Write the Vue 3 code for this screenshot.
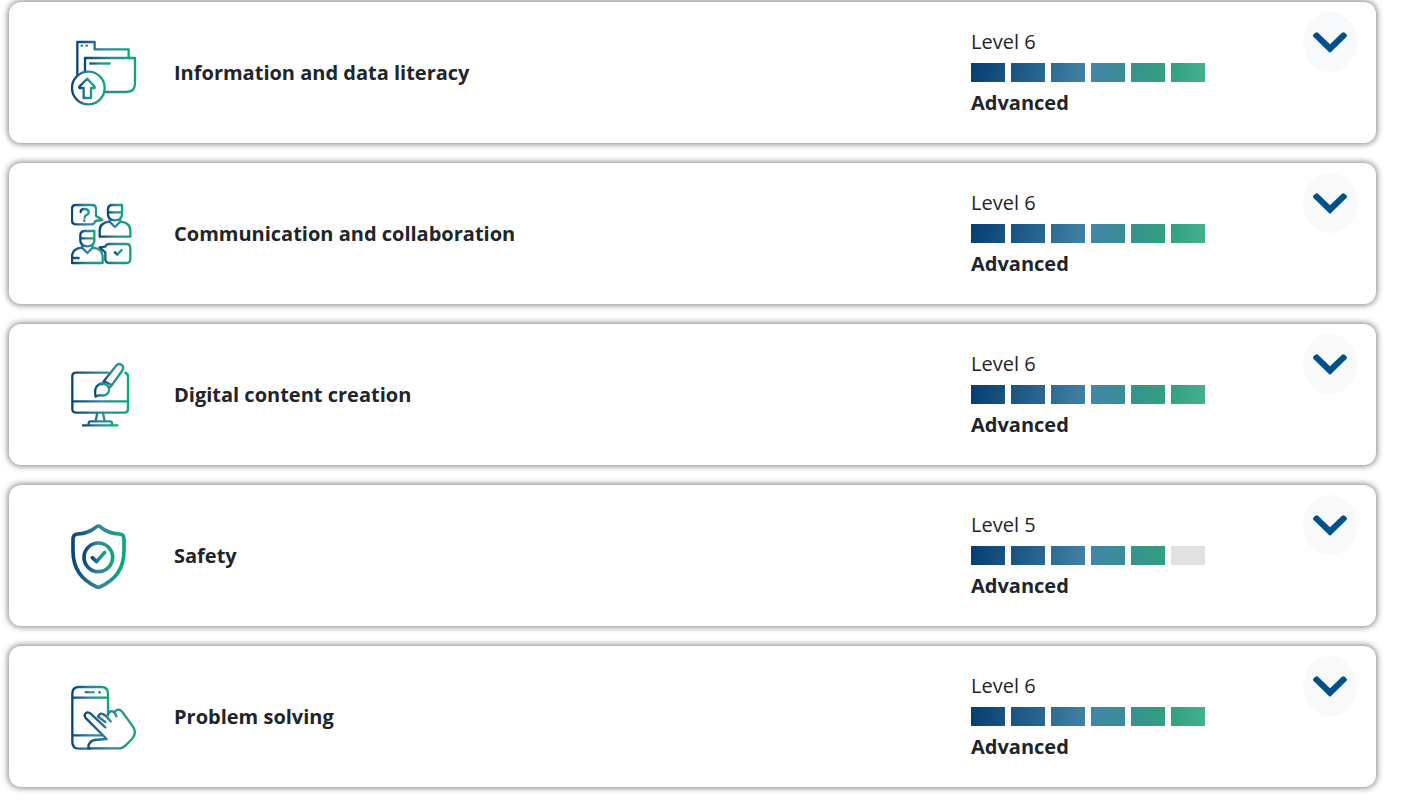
<template>
  <main class="competences">
    <section v-for="(area, index) in areas" :key="area.title" class="card">
      <svg class="card-icon" :viewBox="area.icon.viewBox" aria-hidden="true">
        <defs>
          <linearGradient :id="`icon-gradient-${index}`">
            <stop offset="0" stop-color="#0a4679" />
            <stop offset="0.5" stop-color="#3583a0" />
            <stop offset="1" stop-color="#0aa978" />
          </linearGradient>
        </defs>
        <path
          v-for="d in area.icon.strokes"
          :key="d"
          :d="d"
          fill="none"
          :stroke="`url(#icon-gradient-${index})`"
          :stroke-width="area.icon.weight"
          stroke-linecap="round"
          stroke-linejoin="round"
        />
        <path
          v-for="d in area.icon.fills"
          :key="d"
          :d="d"
          :fill="`url(#icon-gradient-${index})`"
        />
      </svg>
      <h2 class="card-title">{{ area.title }}</h2>
      <div class="level">
        <span class="level-number">Level {{ area.level }}</span>
        <div class="level-bar">
          <span
            v-for="step in 6"
            :key="step"
            class="segment"
            :class="step <= area.level ? `segment-${step}` : ''"
          ></span>
        </div>
        <strong class="level-name">Advanced</strong>
      </div>
      <button
        type="button"
        class="toggle"
        :aria-label="`Show ${area.title}`"
        :aria-expanded="opened === index"
        @click="toggle(index)"
      >
        <svg class="chevron" viewBox="69 95 102 63" aria-hidden="true">
          <path
            d="M71 102L76 97Q80 94 84 97L120 132L156 97Q160 94 164 97L169 102Q173 106 169 110L123 155Q120 158 117 155L71 110Q67 106 71 102Z"
          />
        </svg>
      </button>
    </section>
  </main>
</template>

<script setup>
import { ref } from "vue"

const folderIcon = {
  viewBox: "33 27 201 201",
  weight: 7,
  strokes: [
    "M52 137V36H104V58H206V82",
    "M75 124V84H225V160Q225 186 199 186H137",
    "M134 174A49 49 0 1 1 36 174A49 49 0 1 1 134 174Z",
    "M82 146L104 170V174H93V204H71V174H58V170Z",
  ],
  fills: ["M88 97H152V104H88Z", "M62 44H69V50H62Z", "M77 44H84V50H77Z"],
}

const peopleIcon = {
  viewBox: "33 21 201 201",
  weight: 7,
  strokes: [
    "M48 36H96Q108 36 108 48V68L127 81L106 84Q103 94 94 94H48Q36 94 36 82V48Q36 36 48 36Z",
    "M62 57Q62 48 73 48Q86 48 86 58Q86 64 79 66Q74 68 74 74M73 82V84",
    "M144 58V49Q144 36 158 36H186V64Q186 82 165 82Q144 82 144 64V58H186",
    "M149 81V86Q119 89 119 113V131H211V113Q211 89 181 86V81M149 86L165 102L181 86",
    "M61 136V127Q61 114 75 114H103V142Q103 160 82 160Q61 160 61 142V136H103",
    "M66 159V164Q36 167 36 191V210H128V191Q128 167 98 164V159M66 164L82 180L98 164M36 195H56V196",
    "M148 153H199Q211 153 211 165V198Q211 210 199 210H148Q136 210 136 198V178L119 163L136 161Q138 153 148 153Z",
    "M165 178L172 185L185 171",
  ],
  fills: [],
}

const monitorIcon = {
  viewBox: "33 24 201 201",
  weight: 7,
  strokes: [
    "M144 59H48Q37 59 37 70V168Q37 179 48 179H193Q204 179 204 168V70Q204 63 196 59M37 145H204",
    "M112 180L107 204M129 180L134 204M86 217V211Q86 205 92 205H150Q156 205 156 211V217M69 217H172",
    "M132 84L166 41Q174 29 184 35Q194 42 186 54L155 97L132 84M132 84L126 94M155 97L147 105",
    "M107 131Q103 112 109 102Q121 86 137 94Q151 103 146 116Q139 130 122 127Q114 126 107 131Z",
  ],
  fills: [],
}

const shieldIcon = {
  viewBox: "33 24 201 201",
  weight: 11,
  strokes: [
    "M115 36Q119 36 123 40Q144 58 178 60Q192 61 192 75V111Q192 187 119 219Q115 221 111 219Q39 187 39 111V75Q39 61 53 60Q86 58 107 40Q111 36 115 36Z",
    "M158 130A43 43 0 1 1 72 130A43 43 0 1 1 158 130Z",
    "M97 131L110 143L134 115",
  ],
  fills: [],
}

const phoneIcon = {
  viewBox: "33 24 201 201",
  weight: 7,
  strokes: [
    "M144 119V56Q144 36 124 36H57Q37 36 37 56V201Q37 221 57 221H88M37 68H144M37 181H126",
    "M136 157L92 116Q82 108 76 116Q71 123 79 131L140 192L104 195Q85 198 85 220H178Q188 220 197 211L216 192Q230 178 221 158L188 112Q177 97 165 109Q162 113 169 124M136 141L114 125Q119 114 128 117Q136 119 152 139M143 121Q147 107 158 109Q166 112 169 124",
  ],
  fills: [
    "M77 49H102Q105 49 105 52Q105 55 102 55H77Q74 55 74 52Q74 49 77 49Z",
    "M123 52A4 4 0 1 1 115 52A4 4 0 1 1 123 52Z",
  ],
}

const areas = [
  { title: "Information and data literacy", level: 6, icon: folderIcon },
  { title: "Communication and collaboration", level: 6, icon: peopleIcon },
  { title: "Digital content creation", level: 6, icon: monitorIcon },
  { title: "Safety", level: 5, icon: shieldIcon },
  { title: "Problem solving", level: 6, icon: phoneIcon },
]

const opened = ref(null)

const toggle = (index) => {
  opened.value = opened.value === index ? null : index
}
</script>

<style>
body {
  background-color: white;
}
</style>

<style scoped>
.competences {
  display: flex;
  flex-direction: column;
  gap: 20px;
  padding: 2px 25px 10px 9px;
  font-family: "Open Sans", sans-serif;
  font-size: 20px;
  line-height: 30px;
  color: #212529;
}

.card {
  display: flex;
  align-items: center;
  padding: 0 19px 0 62px;
  border-radius: 12px;
  background-color: white;
  box-shadow: 0 0 6px 1px #808080;
}

.card-icon {
  flex: none;
  width: 67px;
  height: 67px;
}

.card-title {
  flex: 1;
  margin: 0 0 0 36px;
  font-size: 20px;
  font-weight: 700;
}

.level {
  display: flex;
  flex-direction: column;
  gap: 6px;
  width: 332px;
  padding: 25px 0;
}

.level-number {
  font-weight: 400;
}

.level-name {
  font-weight: 700;
}

.level-bar {
  display: flex;
  gap: 6px;
}

.segment {
  width: 34px;
  height: 19px;
  background-color: #e1e1e1;
}

.segment-1 {
  background: linear-gradient(100deg, #073d70, #1a5480);
}

.segment-2 {
  background: linear-gradient(100deg, #1a5280, #2c6a92);
}

.segment-3 {
  background: linear-gradient(100deg, #2d6b92, #4283a5);
}

.segment-4 {
  background: linear-gradient(100deg, #4285a8, #388f94);
}

.segment-5 {
  background: linear-gradient(100deg, #38918f, #32a07e);
}

.segment-6 {
  background: linear-gradient(100deg, #32a080, #45b08f);
}

.toggle {
  display: flex;
  align-items: center;
  justify-content: center;
  align-self: flex-start;
  width: 54px;
  height: 60px;
  margin-top: 10px;
  padding: 0;
  border: none;
  border-radius: 50%;
  background-color: #f8f9fa;
  cursor: pointer;
}

.chevron {
  width: 34px;
  height: 21px;
  fill: #00508a;
}
</style>
